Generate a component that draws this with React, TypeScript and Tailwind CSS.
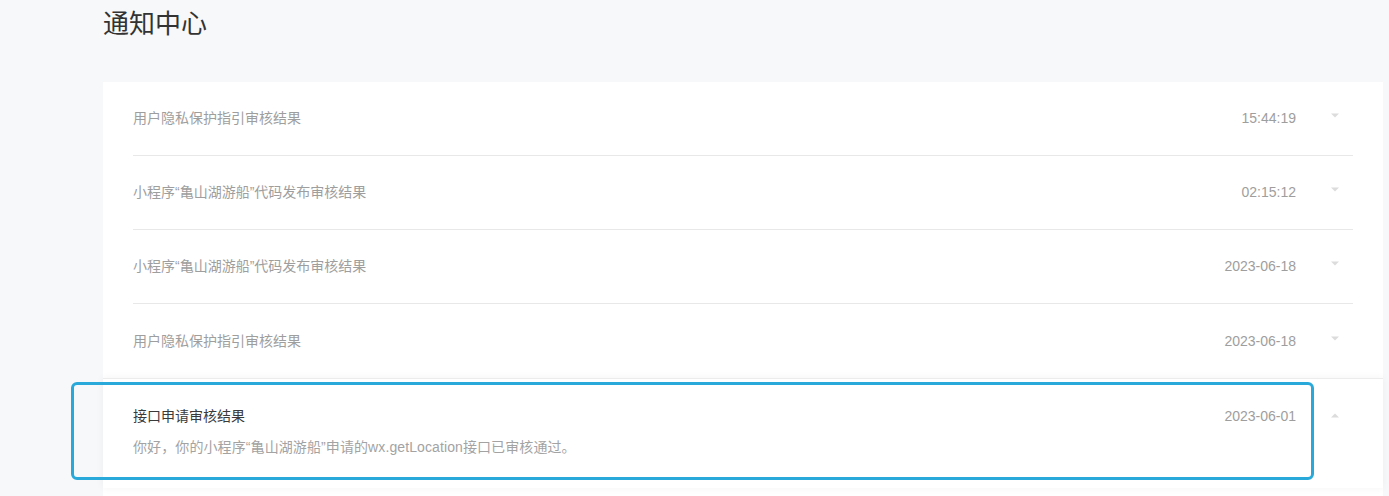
import React from "react";

type Notice = {
  title: string;
  time: string;
  body?: string;
};

const notices: Notice[] = [
  { title: "用户隐私保护指引审核结果", time: "15:44:19" },
  { title: "小程序“亀山湖游船”代码发布审核结果", time: "02:15:12" },
  { title: "小程序“亀山湖游船”代码发布审核结果", time: "2023-06-18" },
  { title: "用户隐私保护指引审核结果", time: "2023-06-18" },
  {
    title: "接口申请审核结果",
    time: "2023-06-01",
    body: "你好，你的小程序“亀山湖游船”申请的wx.getLocation接口已审核通过。",
  },
];

function Caret({ up }: { up?: boolean }) {
  return (
    <svg width="10" height="6" viewBox="0 0 10 6" className="block">
      {up ? (
        <path d="M1 5.5 L5 1.5 L9 5.5 Z" fill="#dcdcdc" />
      ) : (
        <path d="M1 0.5 L5 4.5 L9 0.5 Z" fill="#dcdcdc" />
      )}
    </svg>
  );
}

function CollapsedRow({ item, last }: { item: Notice; last?: boolean }) {
  return (
    <div className="px-[30px]">
      <div
        className={`h-[74px] flex items-center ${
          last ? "" : "border-b border-[#e8e8e8]"
        }`}
      >
        <span className="flex-1 text-[14px] text-[#9e9e9e]">{item.title}</span>
        <span className="text-[14px] text-[#9e9e9e]">{item.time}</span>
        <span className="ml-[34px] mr-[13px] -mt-[5px]">
          <Caret />
        </span>
      </div>
    </div>
  );
}

function ExpandedRow({ item }: { item: Notice }) {
  return (
    <div className="relative bg-white border-t border-[#ececec] shadow-[0_0_8px_rgba(0,0,0,0.05)] px-[30px] pt-[26px] pb-[30px]">
      <div className="flex items-center h-[22px]">
        <span className="flex-1 text-[14px] text-[#3a3a3a]">{item.title}</span>
        <span className="text-[14px] text-[#9e9e9e]">{item.time}</span>
        <span className="ml-[34px] mr-[13px] -mt-[3px]">
          <Caret up />
        </span>
      </div>
      <p className="mt-[9px] text-[14px] leading-[22px] tracking-[0.1px] text-[#a3a3a3]">
        {item.body}
      </p>
      <div className="pointer-events-none absolute left-[-32px] top-[3px] w-[1243px] h-[98px] border-[3px] border-[#29a9da] rounded-[6px]" />
    </div>
  );
}

export default function App() {
  return (
    <div
      className="min-h-[496px] bg-[#f7f8fa] pl-[103px] overflow-hidden"
      style={{ fontFamily: '"Liberation Sans", "Noto Sans CJK SC", sans-serif' }}
    >
      <h1 className="pt-[6px] h-[82px] text-[26px] leading-[36px] text-[#333] font-normal">
        通知中心
      </h1>
      <div className="w-[1280px] bg-white pb-[20px]">
        {notices.slice(0, 4).map((n, i) => (
          <CollapsedRow key={i} item={n} last={i === 3} />
        ))}
        <ExpandedRow item={notices[4]} />
      </div>
    </div>
  );
}
